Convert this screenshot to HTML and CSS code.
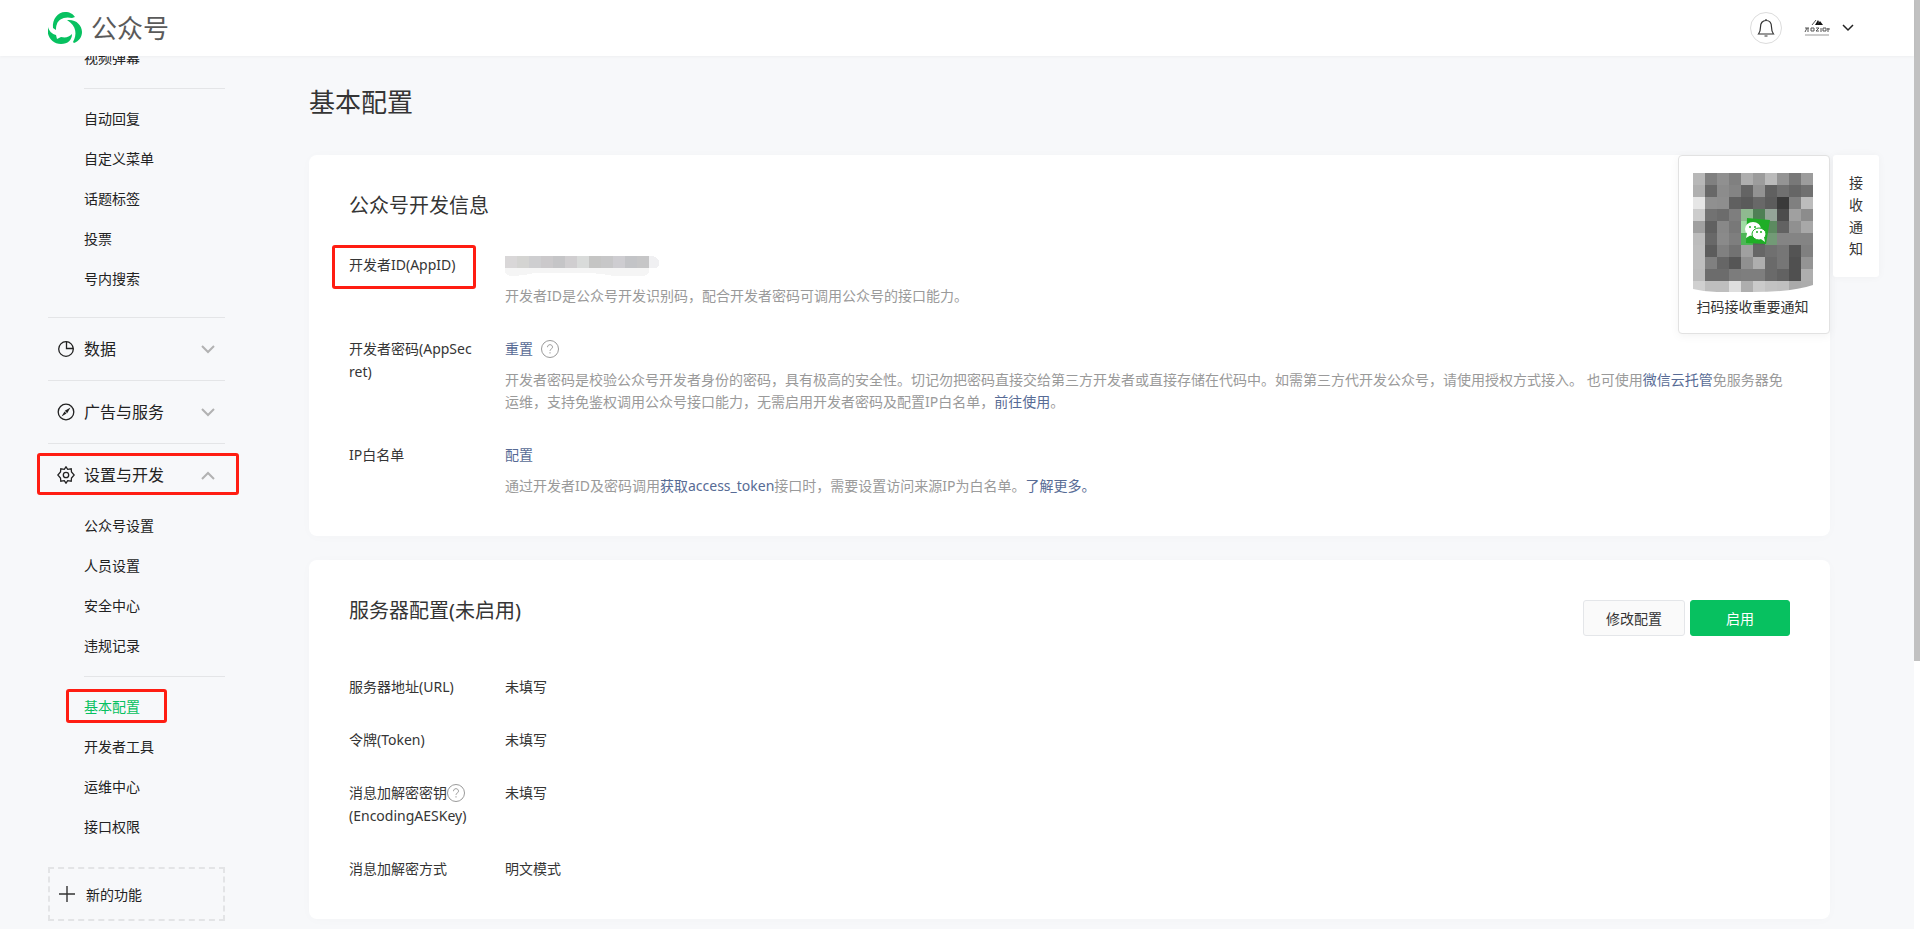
FILE: index.html
```html
<!DOCTYPE html>
<html lang="zh-CN">
<head>
<meta charset="utf-8">
<title>公众号</title>
<link rel="stylesheet" href="styles.css">
</head>
<body>
<div class="page">
  <header class="topbar">
    <a class="brand" href="#">
      <svg class="brand-logo" viewBox="0 0 34 32" aria-hidden="true">
        <path d="M5 16C4 7 10 0 17 0c5 0 8 2 10 5l-3 1C16 4 10 8 9 12c-1 2-1 4-1 6z"/>
        <path d="M0 15c1 4 4 7 8 8l1 4 4-2c5 1 8 0 11-3 0 6-4 10-11 10C4 32-2 24 0 15z"/>
        <path d="M19 8c9-1 15 5 15 12 0 5-3 9-8 11l-1-1c4-7 4-16-6-22z"/>
      </svg>
      <span>公众号</span>
    </a>
    <div class="tools">
      <button class="bell" type="button" aria-label="通知">
        <svg viewBox="0 0 20 20"><path d="M10 1v1.500M2.500 16c1.500-2 2-3.500 2-7 0-4 2-6.500 5.500-6.500s5.500 2.500 5.500 6.500c0 3.500.5 5 2 7zM8.500 18h3"/></svg>
      </button>
      <button class="account" type="button" aria-label="账号">
        <svg class="avatar" viewBox="0 0 26 18" aria-hidden="true">
          <path class="ink" d="M11 6l3-5 1 2-2 3zM13 6l3-4 3 4z"/>
          <path class="thin" d="M8 6l4-5M1 9h4M3 9l-2 4M4 9v4M7 9h3v3H7zM12 9h3l-3 3h3M17 9v4M19 9h3v3h-3zM24 9v4M23 10h3"/>
          <path class="faint" d="M1 16h24"/>
        </svg>
        <svg class="caret" viewBox="0 0 12 8" aria-hidden="true"><path d="M1 1l5 5 5-5"/></svg>
      </button>
    </div>
  </header>

  <div class="body">
    <nav class="sidebar">
      <ul class="sub sub-top">
        <li><a href="#">视频弹幕</a></li>
      </ul>
      <ul class="sub sub-split sub-last">
        <li><a href="#">自动回复</a></li>
        <li><a href="#">自定义菜单</a></li>
        <li><a href="#">话题标签</a></li>
        <li><a href="#">投票</a></li>
        <li><a href="#">号内搜索</a></li>
      </ul>
      <button class="group" type="button">
        <svg class="gicon" viewBox="0 0 18 18"><circle cx="9" cy="9" r="7.300"/><path d="M9.500 1.500V8.500h7"/></svg>
        <span>数据</span>
        <svg class="chev" viewBox="0 0 14 9"><path d="M1 1l6 6 6-6"/></svg>
      </button>
      <button class="group" type="button">
        <svg class="gicon" viewBox="0 0 18 18"><circle cx="9" cy="9" r="7.800"/><path class="solid" d="M13.500 4.500l-3.300 5.700-2.400-2.400zM4.500 13.500l3-5 2 2z"/></svg>
        <span>广告与服务</span>
        <svg class="chev" viewBox="0 0 14 9"><path d="M1 1l6 6 6-6"/></svg>
      </button>
      <button class="group marked mark-group" type="button">
        <svg class="gicon" viewBox="0 0 18 18"><circle cx="9" cy="9" r="2.700"/><path d="M9 .8l1.700 2.500 3.500-.5.300 3.200 2.700 3-2.700 3-.3 3.200-3.500-.5L9 17.200l-1.700-2.500-3.500.5-.3-3.200-2.700-3 2.700-3 .3-3.200 3.500.5z"/></svg>
        <span>设置与开发</span>
        <svg class="chev" viewBox="0 0 14 9"><path d="M1 8l6-6 6 6"/></svg>
      </button>
      <ul class="sub">
        <li><a href="#">公众号设置</a></li>
        <li><a href="#">人员设置</a></li>
        <li><a href="#">安全中心</a></li>
        <li><a href="#">违规记录</a></li>
      </ul>
      <ul class="sub sub-split">
        <li class="marked mark-item"><a class="current" href="#">基本配置</a></li>
        <li><a href="#">开发者工具</a></li>
        <li><a href="#">运维中心</a></li>
        <li><a href="#">接口权限</a></li>
      </ul>
      <button class="new" type="button">
        <svg viewBox="0 0 16 16"><path d="M8 0v16M0 8h16"/></svg>
        <span>新的功能</span>
      </button>
    </nav>

    <main class="main">
      <h1>基本配置</h1>
      <div class="cards">
        <section class="card">
          <div class="card-head"><h2>公众号开发信息</h2></div>
          <dl class="rows">
            <div class="row">
              <dt class="marked mark-label">开发者ID(AppID)</dt>
              <dd>
                <svg class="redacted" viewBox="0 0 154 20" aria-hidden="true" shape-rendering="crispEdges">
                  <path fill="#f5f5f5" d="M0 12h144v5q-3 3-8 3h-28q-12-3-30-3H30q-12 3-24 3Q0 19 0 16z"/>
                  <path fill="#f0f0f2" d="M144 0h4q6 2 6 7t-4 5h-6z"/>
                  <path fill="#d9d7d8" d="M0 0h12v12H0z"/><path fill="#d4d4d2" d="M12 0h12v12H12z"/>
                  <path fill="#ceced0" d="M24 0h12v12H24z"/><path fill="#cbc9cb" d="M36 0h12v12H36z"/>
                  <path fill="#c5c5c7" d="M48 0h12v12H48z"/><path fill="#d0ced0" d="M60 0h12v12H60z"/>
                  <path fill="#d9dbda" d="M72 0h12v12H72z"/><path fill="#c5c5c4" d="M84 0h12v12H84z"/>
                  <path fill="#c7c7c8" d="M96 0h12v12H96z"/><path fill="#cecdd1" d="M108 0h12v12h-12z"/>
                  <path fill="#c3c4c7" d="M120 0h12v12h-12z"/><path fill="#c6c6c7" d="M132 0h12v12h-12z"/>
                </svg>
                <p>开发者ID是公众号开发识别码，配合开发者密码可调用公众号的接口能力。</p>
              </dd>
            </div>
            <div class="row">
              <dt>开发者密码(AppSecret)</dt>
              <dd>
                <div class="value"><a href="#">重置</a><svg class="help" viewBox="0 0 18 18"><circle cx="9" cy="9" r="8.500"/><path d="M6.500 7.200c0-3.400 5-3.300 5 0 0 1.800-2.500 1.800-2.500 3.600M9 12.200v1.300"/></svg></div>
                <p>开发者密码是校验公众号开发者身份的密码，具有极高的安全性。切记勿把密码直接交给第三方开发者或直接存储在代码中。如需第三方代开发公众号，请使用授权方式接入。 也可使用<a href="#">微信云托管</a>免服务器免运维，支持免鉴权调用公众号接口能力，无需启用开发者密码及配置IP白名单，<a href="#">前往使用</a>。</p>
              </dd>
            </div>
            <div class="row">
              <dt>IP白名单</dt>
              <dd>
                <div class="value"><a href="#">配置</a></div>
                <p>通过开发者ID及密码调用<a href="#">获取access_token</a>接口时，需要设置访问来源IP为白名单。<a href="#">了解更多。</a></p>
              </dd>
            </div>
          </dl>
        </section>

        <section class="card">
          <div class="card-head">
            <h2>服务器配置(未启用)</h2>
            <div class="actions">
              <button class="btn" type="button">修改配置</button>
              <button class="btn btn-primary" type="button">启用</button>
            </div>
          </div>
          <dl class="rows">
            <div class="row"><dt>服务器地址(URL)</dt><dd>未填写</dd></div>
            <div class="row"><dt>令牌(Token)</dt><dd>未填写</dd></div>
            <div class="row"><dt><span class="with-help">消息加解密密钥<svg class="help" viewBox="0 0 18 18"><circle cx="9" cy="9" r="8.500"/><path d="M6.500 7.200c0-3.400 5-3.300 5 0 0 1.800-2.500 1.800-2.500 3.600M9 12.200v1.300"/></svg></span>(EncodingAESKey)</dt><dd>未填写</dd></div>
            <div class="row"><dt>消息加解密方式</dt><dd>明文模式</dd></div>
          </dl>
        </section>

        <aside class="notice">
          <div class="qr">
            <svg class="qr-code" viewBox="0 0 120 119" role="img" aria-label="二维码">
              <g id="cells" shape-rendering="crispEdges"></g>
              <path fill="#fff" d="M0 116q12 3 24 3h-24zM60 119q40 0 60-7v7z"/>
              <path fill="#1fae26" d="M54 45l23 2-4 24-20-1z"/>
              <ellipse cx="60" cy="56" rx="8" ry="7" fill="#fff"/>
              <path fill="#fff" d="M54 60l-1 5 5-3z"/>
              <ellipse cx="66" cy="61" rx="7" ry="6" fill="#fff" stroke="#1fae26"/>
              <path fill="#fff" d="M68 66l4 3-1-5z"/>
              <g fill="#1fae26"><circle cx="57" cy="54" r="1"/><circle cx="62" cy="54" r="1"/><circle cx="64" cy="59" r="1"/><circle cx="68" cy="59" r="1"/></g>
            </svg>
            <span>扫码接收重要通知</span>
          </div>
          <button class="tab" type="button">接收通知</button>
        </aside>
      </div>
    </main>
  </div>
  <div class="scroll-track"><div class="scroll-thumb"></div></div>
</div>
<script src="qr.js"></script>
</body>
</html>
```
FILE: qr.js
```js
// Grey levels of the masked code, one string per row of twelve-pixel cells.
const rows = [
  'b8 80 90 80 ae 9c ba 94 78 9c',
  'b0 68 8c 84 64 92 60 70 66 70',
  'e6 90 8e 60 5a 68 5c 3a 80 bc',
  'cc 72 6c 7e 8fb990 4f7f55 94a498 4c a0 8c',
  'a0 60 88 78 a0dca4 70 5c8a60 62 90 a8',
  'bc 68 8a 7e 4cb655 60 729a76 84 84 84',
  'be 5c 80 72 a0 66 70 76 54 80',
  'be 80 66 56 90 ae 6a 76 50 94',
  'bc 6c 6c 7c 7e 7e 6a 62 50 ae',
  'd0 be be de ae ca c2 c0 aa ac'
];
const group = document.getElementById('cells');
rows.forEach((row, y) => row.split(' ').forEach((shade, x) => {
  const cell = document.createElementNS('http://www.w3.org/2000/svg', 'rect');
  cell.setAttribute('x', x * 12);
  cell.setAttribute('y', y * 12);
  cell.setAttribute('width', 12);
  cell.setAttribute('height', 12);
  cell.setAttribute('fill', '#' + (shade.length === 2 ? shade.repeat(3) : shade));
  group.appendChild(cell);
}));
```
FILE: styles.css
```css
*, *::after { box-sizing: border-box; }
body {
  margin: 0;
  background: #f6f8f9;
  color: #353535;
  font: 400 14px/23px "Noto Sans", "Noto Sans CJK SC", sans-serif;
}
h1, h2, p, ul, dl, dd { margin: 0; padding: 0; font-weight: inherit; }
ul { list-style: none; }
a { color: #576b95; text-decoration: none; }
button { font: inherit; color: inherit; background: none; border: 0; padding: 0; margin: 0; cursor: pointer; }
svg { fill: none; stroke: none; flex: none; }

.page { position: relative; height: 100vh; overflow: hidden; padding-right: 6px; background: #f7f8fa; }
.scroll-track { position: absolute; top: 0; right: 0; bottom: 0; width: 6px; background: #fff; }
.scroll-thumb { height: 661px; background: #c1c1c1; }

.topbar {
  position: relative;
  z-index: 1;
  height: 56px;
  display: flex;
  justify-content: space-between;
  align-items: center;
  padding: 0 60px 0 48px;
  background: #fff;
  box-shadow: 0 1px 3px rgba(0, 0, 0, .04);
}
.brand { display: flex; align-items: center; gap: 9px; color: #5a5a5a; font-size: 26px; line-height: 56px; }
.brand-logo { width: 34px; height: 32px; fill: #07c160; }
.tools { display: flex; align-items: center; gap: 22px; }
.bell { width: 32px; height: 32px; border: 1px solid #dcdcdc; border-radius: 50%; display: flex; align-items: center; justify-content: center; }
.bell svg { width: 20px; height: 20px; stroke: #333; stroke-width: 1.2; }
.account { display: flex; align-items: center; gap: 12px; }
.avatar { width: 26px; height: 18px; }
.avatar .ink { fill: #111; }
.avatar .thin { stroke: #555; }
.avatar .faint { stroke: #999; }
.caret { width: 12px; height: 8px; stroke: #222; stroke-width: 1.5; }

.body { display: flex; align-items: flex-start; }
.sidebar { flex: none; width: 225px; padding-left: 48px; color: #222; }
.sub { margin-left: 36px; }
.sub a { display: block; line-height: 40px; color: #222; }
.sub a.current { color: #07c160; }
.sub-top { margin-top: -18px; }
.sub-split { margin-top: 10px; padding-top: 10px; border-top: 1px solid #e4e5e7; }
.sub-last { padding-bottom: 18px; }
.group {
  width: 100%;
  height: 63px;
  display: flex;
  align-items: center;
  border-top: 1px solid #e4e5e7;
  padding: 0 10px 0 9px;
  gap: 9px;
  font-size: 16px;
  text-align: left;
}
.group span { flex: 1; }
.gicon { width: 18px; height: 18px; stroke: #222; stroke-width: 1.3; }
.gicon .solid { fill: #222; stroke: none; }
.chev { width: 14px; height: 9px; stroke: #b2b2b2; stroke-width: 2; }
.new {
  width: 100%;
  height: 54px;
  margin-top: 20px;
  display: flex;
  align-items: center;
  gap: 11px;
  padding-left: 9px;
  border: 2px dashed #e3e4e6;
}
.new svg { width: 16px; height: 16px; stroke: #333; stroke-width: 1.4; }

.marked { position: relative; }
.marked::after { content: ""; position: absolute; border: 3px solid #ff1d12; border-radius: 3px; pointer-events: none; }
.mark-group::after { inset: 9px -14px 11px -11px; }
.mark-item::after { inset: 2px 58px 4px -18px; }
.mark-label::after { inset: -8px -1px auto -17px; height: 44px; }

.main { flex: 1; min-width: 0; padding: 26px 84px 10px; }
h1 { font-size: 26px; line-height: 40px; }
.cards { position: relative; display: flex; flex-direction: column; gap: 24px; margin-top: 33px; }
.card { padding: 40px 40px 39px; background: #fff; border-radius: 8px; box-shadow: 0 1px 12px rgba(0, 0, 0, .02); }
.card-head { display: flex; justify-content: space-between; align-items: flex-start; }
h2 { font-size: 20px; line-height: 22px; }
.actions { display: flex; gap: 5px; padding-bottom: 3px; }
.btn { height: 36px; min-width: 100px; padding: 0 22px; border: 1px solid #e4e6e9; border-radius: 3px; background: #fafafa; }
.btn-primary { background: #07c160; border-color: #07c160; color: #fff; }
.rows { display: flex; flex-direction: column; gap: 30px; padding-top: 36px; }
.row { display: flex; gap: 30px; }
dt { flex: none; width: 126px; word-break: break-all; }
dd { flex: 1; min-width: 0; }
.value { display: flex; align-items: center; gap: 8px; }
.with-help { display: flex; align-items: center; }
.help { width: 18px; height: 18px; stroke: #9a9a9a; }
.redacted { display: block; width: 154px; height: 20px; margin-top: 3px; }
dd p { margin-top: 9px; line-height: 22px; color: #9a9a9a; }

.notice { position: absolute; top: 0; right: -49px; display: flex; align-items: flex-start; gap: 3px; }
.qr {
  width: 152px;
  display: flex;
  flex-direction: column;
  align-items: center;
  gap: 3px;
  padding: 17px 3px 15px 0;
  background: #fff;
  border: 1px solid #e2e2e2;
  border-radius: 4px;
  box-shadow: 0 2px 10px rgba(0, 0, 0, .05);
}
.qr-code { width: 120px; height: 119px; }
.tab { width: 46px; padding: 17px 16px; line-height: 22px; background: #fff; border-radius: 3px; box-shadow: 0 0 8px rgba(0, 0, 0, .04); }
```
